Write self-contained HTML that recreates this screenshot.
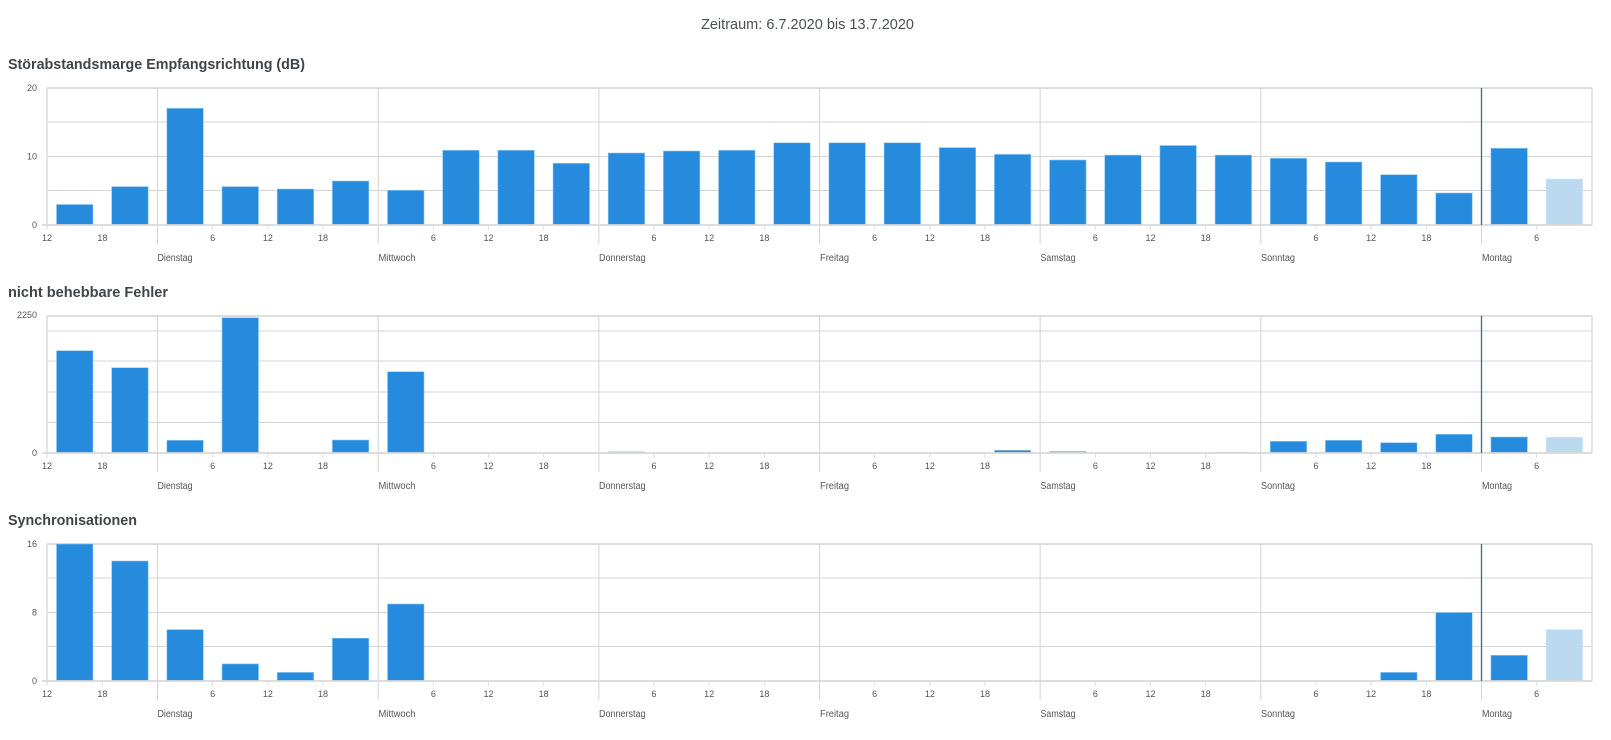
<!DOCTYPE html>
<html lang="de"><head><meta charset="utf-8"><title>Zeitraum</title>
<style>
html,body{margin:0;padding:0;background:#fff;width:1611px;height:740px;overflow:hidden}
svg{display:block;font-family:"Liberation Sans",sans-serif}
.h{font-size:15px;fill:#4a4f53}
.t{font-size:14.5px;font-weight:bold;fill:#3f4549}
.n{font-size:9px;fill:#555;text-anchor:middle}
.y{font-size:9px;fill:#555;text-anchor:end}
.d{font-size:10px;fill:#555}
.b{fill:#268bdd;stroke:#8fcaf2;stroke-width:.6}
.l{fill:#bbdaf0;stroke:#d3e7f5;stroke-width:.6}
</style></head><body>
<svg width="1611" height="740" viewBox="0 0 1611 740" xmlns="http://www.w3.org/2000/svg">
<defs>
<g id="frame">
<path d="M47 88V225M1592 88V225" stroke="#dadada" stroke-width="1.4" fill="none"/>
<path d="M47 88H1592" stroke="#dadada" stroke-width="1.8" fill="none"/>
<path d="M157.5 88V244M378.17 88V244M598.83 88V244M819.5 88V244M1040.17 88V244M1260.83 88V244M1481.5 225V244" stroke="#d6d6d6" stroke-width="1.1" fill="none"/>
<path d="M102.33 225V230M212.67 225V230M267.83 225V230M323 225V230M433.33 225V230M488.5 225V230M543.67 225V230M654 225V230M709.17 225V230M764.33 225V230M874.67 225V230M929.83 225V230M985 225V230M1095.33 225V230M1150.5 225V230M1205.67 225V230M1316 225V230M1371.17 225V230M1426.33 225V230M1536.67 225V230M47 225V230" stroke="#dedede" stroke-width="1" fill="none"/>
</g>
<path id="g1" d="M47 122H1592M47 156.5H1592M47 190.5H1592" stroke="#d6d6d6" stroke-width="1" fill="none"/>
<path id="g2" d="M47 103H1592M47 133H1592M47 164H1592M47 194.5H1592" stroke="#d6d6d6" stroke-width="1" fill="none"/>
<g id="top"><path d="M42 225H1592" stroke="#d8d8d8" stroke-width="1.8" fill="none"/><path d="M1481.5 88V225" stroke="#2a6e9e" stroke-width="1.3" fill="none"/></g>
</defs>
<rect width="1611" height="740" fill="#fff"/>
<text class="h" x="701" y="29" textLength="213" lengthAdjust="spacingAndGlyphs">Zeitraum: 6.7.2020 bis 13.7.2020</text>

<text class="t" x="8" y="69" textLength="297" lengthAdjust="spacingAndGlyphs">Störabstandsmarge Empfangsrichtung (dB)</text>
<g>
<use href="#g1"/><use href="#frame"/>
<rect class="b" x="56.5" y="204.5" width="36.5" height="20.5"/>
<rect class="b" x="111.67" y="186.6" width="36.5" height="38.4"/>
<rect class="b" x="166.84" y="108.3" width="36.5" height="116.7"/>
<rect class="b" x="222.01" y="186.6" width="36.5" height="38.4"/>
<rect class="b" x="277.18" y="189" width="36.5" height="36"/>
<rect class="b" x="332.35" y="181" width="36.5" height="44"/>
<rect class="b" x="387.52" y="190.3" width="36.5" height="34.7"/>
<rect class="b" x="442.69" y="150.3" width="36.5" height="74.7"/>
<rect class="b" x="497.86" y="150.3" width="36.5" height="74.7"/>
<rect class="b" x="553.03" y="163.3" width="36.5" height="61.7"/>
<rect class="b" x="608.2" y="153" width="36.5" height="72"/>
<rect class="b" x="663.37" y="151" width="36.5" height="74"/>
<rect class="b" x="718.54" y="150.3" width="36.5" height="74.7"/>
<rect class="b" x="773.71" y="142.8" width="36.5" height="82.2"/>
<rect class="b" x="828.88" y="142.8" width="36.5" height="82.2"/>
<rect class="b" x="884.05" y="142.8" width="36.5" height="82.2"/>
<rect class="b" x="939.22" y="147.6" width="36.5" height="77.4"/>
<rect class="b" x="994.39" y="154.4" width="36.5" height="70.6"/>
<rect class="b" x="1049.56" y="160" width="36.5" height="65"/>
<rect class="b" x="1104.73" y="155.1" width="36.5" height="69.9"/>
<rect class="b" x="1159.9" y="145.5" width="36.5" height="79.5"/>
<rect class="b" x="1215.07" y="155.1" width="36.5" height="69.9"/>
<rect class="b" x="1270.24" y="158.3" width="36.5" height="66.7"/>
<rect class="b" x="1325.41" y="162" width="36.5" height="63"/>
<rect class="b" x="1380.58" y="174.7" width="36.5" height="50.3"/>
<rect class="b" x="1435.75" y="193" width="36.5" height="32"/>
<rect class="b" x="1490.92" y="148.3" width="36.5" height="76.7"/>
<rect class="l" x="1546.09" y="179" width="36.5" height="46"/>
<use href="#top"/>
<text class="y" x="37" y="91">20</text><text class="y" x="37" y="159.5">10</text><text class="y" x="37" y="228">0</text>
<text class="n" x="47" y="241">12</text><text class="n" x="102.33" y="241">18</text><text class="n" x="212.67" y="241">6</text><text class="n" x="267.83" y="241">12</text><text class="n" x="323" y="241">18</text><text class="n" x="433.33" y="241">6</text><text class="n" x="488.5" y="241">12</text><text class="n" x="543.67" y="241">18</text><text class="n" x="654" y="241">6</text><text class="n" x="709.17" y="241">12</text><text class="n" x="764.33" y="241">18</text><text class="n" x="874.67" y="241">6</text><text class="n" x="929.83" y="241">12</text><text class="n" x="985" y="241">18</text><text class="n" x="1095.33" y="241">6</text><text class="n" x="1150.5" y="241">12</text><text class="n" x="1205.67" y="241">18</text><text class="n" x="1316" y="241">6</text><text class="n" x="1371.17" y="241">12</text><text class="n" x="1426.33" y="241">18</text><text class="n" x="1536.67" y="241">6</text>
<text class="d" x="157.5" y="261" textLength="35" lengthAdjust="spacingAndGlyphs">Dienstag</text><text class="d" x="378.5" y="261" textLength="37" lengthAdjust="spacingAndGlyphs">Mittwoch</text><text class="d" x="599" y="261" textLength="46.5" lengthAdjust="spacingAndGlyphs">Donnerstag</text><text class="d" x="820" y="261" textLength="29" lengthAdjust="spacingAndGlyphs">Freitag</text><text class="d" x="1040.5" y="261" textLength="35" lengthAdjust="spacingAndGlyphs">Samstag</text><text class="d" x="1261" y="261" textLength="34" lengthAdjust="spacingAndGlyphs">Sonntag</text><text class="d" x="1482" y="261" textLength="30" lengthAdjust="spacingAndGlyphs">Montag</text>
</g>

<text class="t" x="8" y="297" textLength="160" lengthAdjust="spacingAndGlyphs">nicht behebbare Fehler</text>
<g transform="translate(0,228)">
<use href="#g2"/><use href="#frame"/>
<rect class="b" x="56.5" y="122.7" width="36.5" height="102.3"/>
<rect class="b" x="111.67" y="139.7" width="36.5" height="85.3"/>
<rect class="b" x="166.84" y="212.3" width="36.5" height="12.7"/>
<rect class="b" x="222.01" y="89.7" width="36.5" height="135.3"/>
<rect class="b" x="332.35" y="212" width="36.5" height="13"/>
<rect class="b" x="387.52" y="143.7" width="36.5" height="81.3"/>
<rect x="608.2" y="223.7" width="36.5" height="1.3" fill="#7fa9c6"/>
<rect x="994.39" y="222.3" width="36.5" height="2.7" fill="#3f86bd"/>
<rect x="1049.56" y="223.3" width="36.5" height="1.7" fill="#7fa9c6"/>
<rect x="1215.07" y="224" width="36.5" height="1" fill="#c8d3db"/>
<rect class="b" x="1270.24" y="213.3" width="36.5" height="11.7"/>
<rect class="b" x="1325.41" y="212.3" width="36.5" height="12.7"/>
<rect class="b" x="1380.58" y="214.7" width="36.5" height="10.3"/>
<rect class="b" x="1435.75" y="206.3" width="36.5" height="18.7"/>
<rect class="b" x="1490.92" y="209" width="36.5" height="16"/>
<rect class="l" x="1546.09" y="209.3" width="36.5" height="15.7"/>
<use href="#top"/>
<text class="y" x="37" y="90">2250</text><text class="y" x="37" y="228">0</text>
<text class="n" x="47" y="241">12</text><text class="n" x="102.33" y="241">18</text><text class="n" x="212.67" y="241">6</text><text class="n" x="267.83" y="241">12</text><text class="n" x="323" y="241">18</text><text class="n" x="433.33" y="241">6</text><text class="n" x="488.5" y="241">12</text><text class="n" x="543.67" y="241">18</text><text class="n" x="654" y="241">6</text><text class="n" x="709.17" y="241">12</text><text class="n" x="764.33" y="241">18</text><text class="n" x="874.67" y="241">6</text><text class="n" x="929.83" y="241">12</text><text class="n" x="985" y="241">18</text><text class="n" x="1095.33" y="241">6</text><text class="n" x="1150.5" y="241">12</text><text class="n" x="1205.67" y="241">18</text><text class="n" x="1316" y="241">6</text><text class="n" x="1371.17" y="241">12</text><text class="n" x="1426.33" y="241">18</text><text class="n" x="1536.67" y="241">6</text>
<text class="d" x="157.5" y="261" textLength="35" lengthAdjust="spacingAndGlyphs">Dienstag</text><text class="d" x="378.5" y="261" textLength="37" lengthAdjust="spacingAndGlyphs">Mittwoch</text><text class="d" x="599" y="261" textLength="46.5" lengthAdjust="spacingAndGlyphs">Donnerstag</text><text class="d" x="820" y="261" textLength="29" lengthAdjust="spacingAndGlyphs">Freitag</text><text class="d" x="1040.5" y="261" textLength="35" lengthAdjust="spacingAndGlyphs">Samstag</text><text class="d" x="1261" y="261" textLength="34" lengthAdjust="spacingAndGlyphs">Sonntag</text><text class="d" x="1482" y="261" textLength="30" lengthAdjust="spacingAndGlyphs">Montag</text>
</g>

<text class="t" x="8" y="525" textLength="129" lengthAdjust="spacingAndGlyphs">Synchronisationen</text>
<g transform="translate(0,456)">
<use href="#g1"/><use href="#frame"/>
<rect class="b" x="56.5" y="88" width="36.5" height="137"/>
<rect class="b" x="111.67" y="105" width="36.5" height="120"/>
<rect class="b" x="166.84" y="173.6" width="36.5" height="51.4"/>
<rect class="b" x="222.01" y="207.9" width="36.5" height="17.1"/>
<rect class="b" x="277.18" y="216.4" width="36.5" height="8.6"/>
<rect class="b" x="332.35" y="182.2" width="36.5" height="42.8"/>
<rect class="b" x="387.52" y="148" width="36.5" height="77"/>
<rect class="b" x="1380.58" y="216.4" width="36.5" height="8.6"/>
<rect class="b" x="1435.75" y="156.5" width="36.5" height="68.5"/>
<rect class="b" x="1490.92" y="199.3" width="36.5" height="25.7"/>
<rect class="l" x="1546.09" y="173.6" width="36.5" height="51.4"/>
<use href="#top"/>
<text class="y" x="37" y="91">16</text><text class="y" x="37" y="159.5">8</text><text class="y" x="37" y="228">0</text>
<text class="n" x="47" y="241">12</text><text class="n" x="102.33" y="241">18</text><text class="n" x="212.67" y="241">6</text><text class="n" x="267.83" y="241">12</text><text class="n" x="323" y="241">18</text><text class="n" x="433.33" y="241">6</text><text class="n" x="488.5" y="241">12</text><text class="n" x="543.67" y="241">18</text><text class="n" x="654" y="241">6</text><text class="n" x="709.17" y="241">12</text><text class="n" x="764.33" y="241">18</text><text class="n" x="874.67" y="241">6</text><text class="n" x="929.83" y="241">12</text><text class="n" x="985" y="241">18</text><text class="n" x="1095.33" y="241">6</text><text class="n" x="1150.5" y="241">12</text><text class="n" x="1205.67" y="241">18</text><text class="n" x="1316" y="241">6</text><text class="n" x="1371.17" y="241">12</text><text class="n" x="1426.33" y="241">18</text><text class="n" x="1536.67" y="241">6</text>
<text class="d" x="157.5" y="261" textLength="35" lengthAdjust="spacingAndGlyphs">Dienstag</text><text class="d" x="378.5" y="261" textLength="37" lengthAdjust="spacingAndGlyphs">Mittwoch</text><text class="d" x="599" y="261" textLength="46.5" lengthAdjust="spacingAndGlyphs">Donnerstag</text><text class="d" x="820" y="261" textLength="29" lengthAdjust="spacingAndGlyphs">Freitag</text><text class="d" x="1040.5" y="261" textLength="35" lengthAdjust="spacingAndGlyphs">Samstag</text><text class="d" x="1261" y="261" textLength="34" lengthAdjust="spacingAndGlyphs">Sonntag</text><text class="d" x="1482" y="261" textLength="30" lengthAdjust="spacingAndGlyphs">Montag</text>
</g>
</svg>
</body></html>
